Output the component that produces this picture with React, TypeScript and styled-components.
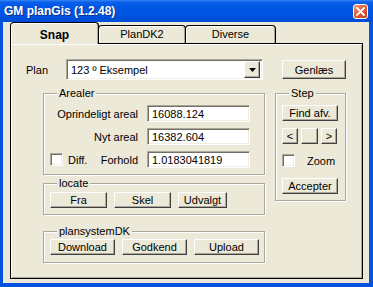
import React from "react";
import styled, { createGlobalStyle, css } from "styled-components";

const Global = createGlobalStyle`
  html, body { margin: 0; padding: 0; background: #ece9d8; }
  body { font-family: "Liberation Sans", Arial, sans-serif; font-size: 11px; color: #000; }
  * { box-sizing: border-box; }
`;

const Window = styled.div`
  width: 373px;
  height: 287px;
  display: flex;
  flex-direction: column;
  background: #0553e1;
`;

const TitleBar = styled.div`
  flex: none;
  height: 22px;
  display: flex;
  align-items: center;
  justify-content: space-between;
  padding: 0 5px 0 4px;
  background: linear-gradient(
    to bottom,
    #3a86f7 0px,
    #0b5fea 2px,
    #0056e4 7px,
    #0053e1 15px,
    #004cd8 22px
  );
`;

const Title = styled.span`
  font-family: "Liberation Sans", Arial, sans-serif;
  font-weight: bold;
  font-size: 12px;
  color: #fff;
  text-shadow: 1px 1px 0 #0a2f8f;
`;

const CloseButton = styled.div`
  width: 15px;
  height: 15px;
  display: flex;
  align-items: center;
  justify-content: center;
  border: 1px solid #fff;
  border-radius: 3px;
  background: linear-gradient(135deg, #f09a7c 0%, #e25e38 45%, #c9401c 100%);
`;

const Client = styled.div`
  flex: 1;
  margin: 0 4px 4px 3px;
  background: #ece9d8;
  display: flex;
  flex-direction: column;
`;

const TabStrip = styled.div`
  flex: none;
  height: 21px;
  display: flex;
  align-items: flex-end;
  padding-left: 7px;
  position: relative;
  z-index: 1;
`;

const Tab = styled.div<{ $active?: boolean; $w: number }>`
  width: ${(p) => p.$w}px;
  margin-left: -1px;
  &:first-child { margin-left: 0; }
  display: flex;
  align-items: center;
  justify-content: center;
  border: 1px solid #000;
  border-bottom: none;
  border-radius: 4px 4px 0 0;
  background: #ece9d8;
  box-shadow: inset 1px 1px 0 #fff, inset -1px 0 0 #aca899;
  ${(p) =>
    p.$active
      ? css`
          height: 22px;
          margin-bottom: -1px;
          font-weight: bold;
          font-size: 12px;
          padding-top: 2px;
          position: relative;
          z-index: 2;
        `
      : css`
          height: 18px;
          padding-bottom: 2px;
        `}
`;

const Panel = styled.div`
  flex: 1;
  margin: 0 6px 4px 7px;
  border: 1px solid #000;
  box-shadow: inset 1px 1px 0 #fff, inset -1px -1px 0 #aca899;
  padding: 15px 0 0 15px;
  display: flex;
  flex-direction: column;
`;

const PlanRow = styled.div`
  display: flex;
  align-items: center;
`;

const Label = styled.span<{ $w?: number }>`
  ${(p) => (p.$w ? `width: ${p.$w}px;` : "")}
  white-space: nowrap;
`;

const sunken = css`
  border: 1px solid;
  border-color: #aca899 #fff #fff #aca899;
  box-shadow: inset 1px 1px 0 #716f64, inset -1px -1px 0 #f1efe2;
  background: #fff;
`;

const Combo = styled.div`
  ${sunken}
  width: 197px;
  height: 21px;
  display: flex;
  align-items: center;
  padding: 2px 2px 2px 4px;
`;

const ComboText = styled.span`
  flex: 1;
`;

const raised = css`
  background: #ece9d8;
  border: 1px solid;
  border-color: #fff #404040 #404040 #fff;
  box-shadow: inset -1px -1px 0 #aca899;
`;

const ComboArrow = styled.div`
  ${raised}
  width: 16px;
  height: 17px;
  display: flex;
  align-items: center;
  justify-content: center;
`;

const Button = styled.div<{ $w: number; $h?: number; $ml?: number; $mt?: number }>`
  ${raised}
  width: ${(p) => p.$w}px;
  height: ${(p) => p.$h ?? 16}px;
  margin-left: ${(p) => p.$ml ?? 0}px;
  margin-top: ${(p) => p.$mt ?? 0}px;
  display: flex;
  align-items: center;
  justify-content: center;
  white-space: nowrap;
  flex: none;
`;

const Columns = styled.div`
  display: flex;
  align-items: flex-start;
  gap: 10px;
  margin-top: 7px;
  padding-left: 17px;
`;

const LeftCol = styled.div`
  display: flex;
  flex-direction: column;
  width: 222px;
`;

const Group = styled.fieldset<{ $w?: number; $mt?: number; $pt: number; $pb: number }>`
  margin: ${(p) => p.$mt ?? 0}px 0 0 0;
  ${(p) => (p.$w ? `width: ${p.$w}px;` : "")}
  border: 1px solid #aca899;
  box-shadow: inset 1px 1px 0 #fff, 1px 1px 0 #fff;
  padding: ${(p) => p.$pt}px 14px ${(p) => p.$pb}px 6px;
  min-width: 0;
`;

const Legend = styled.legend`
  padding: 0 2px;
  margin-left: 7px;
  line-height: 13px;
  background: #ece9d8;
`;

const FieldGrid = styled.div`
  display: grid;
  grid-template-columns: 1fr 103px;
  column-gap: 9px;
  row-gap: 6px;
  align-items: center;
`;

const RightLabel = styled.span`
  text-align: right;
  white-space: nowrap;
`;

const Field = styled.div`
  ${sunken}
  height: 17px;
  display: flex;
  align-items: center;
  padding-left: 4px;
`;

const SplitCell = styled.div`
  display: flex;
  align-items: center;
  justify-content: space-between;
`;

const Check = styled.label<{ $gap: number; $mt?: number }>`
  display: flex;
  align-items: center;
  gap: ${(p) => p.$gap}px;
  margin-top: ${(p) => p.$mt ?? 0}px;
`;

const Box = styled.span`
  ${sunken}
  width: 13px;
  height: 13px;
  flex: none;
`;

const ButtonRow = styled.div<{ $gap: number; $mt?: number }>`
  display: flex;
  gap: ${(p) => p.$gap}px;
  margin-top: ${(p) => p.$mt ?? 0}px;
`;

const StepBody = styled.div`
  display: flex;
  flex-direction: column;
`;

export default function App() {
  return (
    <>
      <Global />
      <Window>
        <TitleBar>
          <Title>GM planGis (1.2.48)</Title>
          <CloseButton>
            <svg width="9" height="9" viewBox="0 0 9 9">
              <path d="M1 1 L8 8 M8 1 L1 8" stroke="#fff" strokeWidth="1.8" strokeLinecap="square" />
            </svg>
          </CloseButton>
        </TitleBar>
        <Client>
          <TabStrip>
            <Tab $active $w={89}>Snap</Tab>
            <Tab $w={88}>PlanDK2</Tab>
            <Tab $w={91}>Diverse</Tab>
          </TabStrip>
          <Panel>
            <PlanRow>
              <Label $w={40}>Plan</Label>
              <Combo>
                <ComboText>123 º Eksempel</ComboText>
                <ComboArrow>
                  <svg width="7" height="4" viewBox="0 0 7 4">
                    <path d="M0 0 H7 L3.5 4 Z" fill="#000" />
                  </svg>
                </ComboArrow>
              </Combo>
              <Button $w={64} $h={19} $ml={19}>Genlæs</Button>
            </PlanRow>
            <Columns>
              <LeftCol>
                <Group $pt={5} $pb={6}>
                  <Legend>Arealer</Legend>
                  <FieldGrid>
                    <RightLabel>Oprindeligt areal</RightLabel>
                    <Field>16088.124</Field>
                    <RightLabel>Nyt areal</RightLabel>
                    <Field>16382.604</Field>
                    <SplitCell>
                      <Check $gap={5}>
                        <Box />
                        Diff.
                      </Check>
                      <RightLabel>Forhold</RightLabel>
                    </SplitCell>
                    <Field>1.0183041819</Field>
                  </FieldGrid>
                </Group>
                <Group $mt={2} $pt={2} $pb={6}>
                  <Legend>locate</Legend>
                  <ButtonRow $gap={7}>
                    <Button $w={57}>Fra</Button>
                    <Button $w={57}>Skel</Button>
                    <Button $w={49}>Udvalgt</Button>
                  </ButtonRow>
                </Group>
                <Group $mt={10} $pt={1} $pb={7}>
                  <Legend>plansystemDK</Legend>
                  <ButtonRow $gap={7}>
                    <Button $w={65}>Download</Button>
                    <Button $w={65}>Godkend</Button>
                    <Button $w={65}>Upload</Button>
                  </ButtonRow>
                </Group>
              </LeftCol>
              <Group $w={71} $pt={5} $pb={6}>
                <Legend>Step</Legend>
                <StepBody>
                  <Button $w={56}>Find afv.</Button>
                  <ButtonRow $gap={3} $mt={7}>
                    <Button $w={16}>&lt;</Button>
                    <Button $w={17}></Button>
                    <Button $w={16}>&gt;</Button>
                  </ButtonRow>
                  <Check $gap={12} $mt={10}>
                    <Box />
                    Zoom
                  </Check>
                  <Button $w={56} $mt={11}>Accepter</Button>
                </StepBody>
              </Group>
            </Columns>
          </Panel>
        </Client>
      </Window>
    </>
  );
}
